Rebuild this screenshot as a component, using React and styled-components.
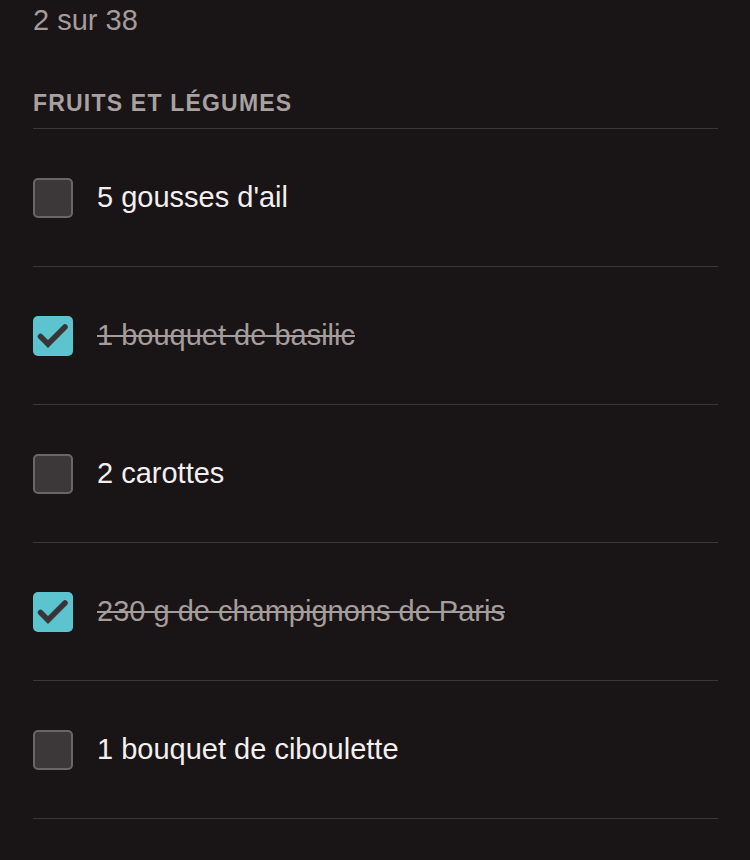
import React from "react";
import styled, { createGlobalStyle } from "styled-components";

const Global = createGlobalStyle`
  html, body { margin: 0; padding: 0; background: #191416; }
  body { font-family: "Liberation Sans", Arial, sans-serif; -webkit-font-smoothing: antialiased; }
`;

const Page = styled.div`
  min-height: 860px;
  background: #191416;
  padding: 6px 32px 0 33px;
  box-sizing: border-box;
`;

const Count = styled.div`
  font-size: 29px;
  line-height: 29px;
  color: #a39b9b;
`;

const SectionTitle = styled.h2`
  margin: 57px 0 0;
  padding-bottom: 13px;
  font-size: 23px;
  line-height: 23px;
  font-weight: 700;
  letter-spacing: 1.2px;
  color: #a9a1a0;
  border-bottom: 1px solid #3a3537;
`;

const List = styled.ul`
  list-style: none;
  margin: 0;
  padding: 0;
`;

const Row = styled.li`
  height: 137px;
  display: flex;
  align-items: center;
  gap: 24px;
  border-bottom: 1px solid #3a3537;
`;

const Box = styled.span`
  width: 40px;
  height: 40px;
  flex: none;
  box-sizing: border-box;
  border-radius: 5px;
  display: flex;
  align-items: center;
  justify-content: center;
  background: ${(p) => (p.$checked ? "#5bc4ce" : "#3c3839")};
  border: ${(p) => (p.$checked ? "none" : "2px solid #6a6566")};
`;

const Label = styled.span`
  font-size: 29px;
  line-height: 29px;
  color: ${(p) => (p.$checked ? "#a59d9c" : "#f3efef")};
  text-decoration: ${(p) => (p.$checked ? "line-through" : "none")};
  text-decoration-thickness: 2px;
`;

const CheckIcon = () => (
  <svg width="40" height="40" viewBox="0 0 40 40">
    <polyline
      points="7.5,20.5 15,28 32,11"
      fill="none"
      stroke="#3a3436"
      strokeWidth="5.5"
      strokeLinejoin="miter"
      strokeLinecap="round"
    />
  </svg>
);

const items = [
  { text: "5 gousses d'ail", checked: false },
  { text: "1 bouquet de basilic", checked: true },
  { text: "2 carottes", checked: false },
  { text: "230 g de champignons de Paris", checked: true },
  { text: "1 bouquet de ciboulette", checked: false },
];

export default function App() {
  return (
    <>
      <Global />
      <Page>
        <Count>2 sur 38</Count>
        <SectionTitle>FRUITS ET LÉGUMES</SectionTitle>
        <List>
          {items.map((it) => (
            <Row key={it.text}>
              <Box $checked={it.checked}>{it.checked && <CheckIcon />}</Box>
              <Label $checked={it.checked}>{it.text}</Label>
            </Row>
          ))}
        </List>
      </Page>
    </>
  );
}
